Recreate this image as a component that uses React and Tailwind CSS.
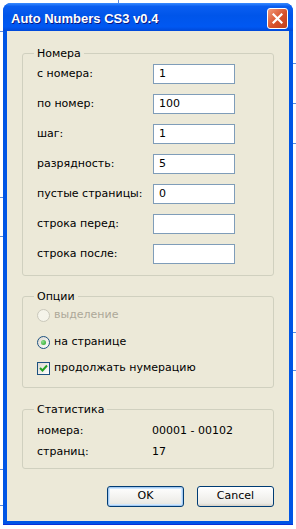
import React from 'react';

const rows = [
  { label: 'с номера:', value: '1' },
  { label: 'по номер:', value: '100' },
  { label: 'шаг:', value: '1' },
  { label: 'разрядность:', value: '5' },
  { label: 'пустые страницы:', value: '0' },
  { label: 'строка перед:', value: '' },
  { label: 'строка после:', value: '' },
];

function Group({ title, className, children }) {
  return (
    <fieldset className={`border border-[#D0D0BF] rounded-[3px] pl-[11px] pr-[14px] ${className}`}>
      <legend className="px-[3px] leading-[13px]">{title}</legend>
      <div className="pl-[3px]">{children}</div>
    </fieldset>
  );
}

function Radio({ checked, disabled, label }) {
  return (
    <div className="flex items-center h-[16px] gap-[4px]">
      <span
        className={`w-[13px] h-[13px] rounded-full border flex items-center justify-center ${
          disabled
            ? 'border-[#CAC8BB] bg-[#F5F4EA]'
            : 'border-[#1C5180] bg-[linear-gradient(135deg,#DCD9CF,#FFFFFF)]'
        }`}
      >
        {checked && (
          <span className="w-[5px] h-[5px] rounded-full bg-[radial-gradient(circle_at_35%_35%,#8DE08D,#21A121)]" />
        )}
      </span>
      <span className={disabled ? 'text-[#ACA899]' : ''}>{label}</span>
    </div>
  );
}

function Checkbox({ label }) {
  return (
    <div className="flex items-center h-[16px] gap-[4px]">
      <span className="w-[13px] h-[13px] border border-[#1C5180] bg-[linear-gradient(135deg,#DCD9CF,#FFFFFF)] flex items-center justify-center">
        <svg width="9" height="9" viewBox="0 0 9 9">
          <path d="M1 4 L3.5 6.5 L8 1.5" fill="none" stroke="#21A121" strokeWidth="2" />
        </svg>
      </span>
      <span>{label}</span>
    </div>
  );
}

export default function App() {
  return (
    <div className="relative w-[296px] h-[529px] bg-white pt-[3px] pl-[3px] text-[11px] text-black font-['DejaVu_Sans',sans-serif]">
      {/* guide lines from the layout behind the dialog */}
      <div className="absolute left-0 top-[31px] w-[3px] h-px bg-[#5B8BE0]" />
      <div className="absolute left-0 top-[197px] w-[3px] h-px bg-[#5B8BE0]" />
      <div className="absolute left-0 top-[236px] w-[3px] h-px bg-[#5B8BE0]" />
      <div className="absolute left-0 top-[469px] w-[3px] h-px bg-[#5B8BE0]" />
      <div className="absolute left-0 top-[505px] w-[3px] h-px bg-[#5B8BE0]" />
      <div className="absolute right-0 top-[63px] w-[3px] h-px bg-[#5B8BE0]" />
      <div className="absolute right-0 top-[103px] w-[3px] h-px bg-[#5B8BE0]" />
      <div className="absolute right-0 top-[143px] w-[3px] h-px bg-[#5B8BE0]" />
      <div className="absolute right-0 top-[332px] w-[3px] h-px bg-[#5B8BE0]" />
      <div className="absolute right-0 top-[370px] w-[3px] h-px bg-[#5B8BE0]" />
      <div className="absolute left-[118px] top-0 w-px h-[3px] bg-[#5B8BE0]" />

      <div className="w-[290px] h-[522px] flex flex-col rounded-t-[8px] overflow-hidden bg-[#0055E5] border-b-[1px] border-[#0831D9]">
        <div className="h-[28px] shrink-0 flex items-center pl-[8px] pt-[4px] bg-[linear-gradient(to_bottom,#3A8CFF_0%,#0A5EF0_12%,#0055EA_45%,#0058F2_85%,#0048D8_100%)]">
          <span className="text-white font-bold text-[13px] font-['Liberation_Sans',sans-serif] [text-shadow:1px_1px_#0A1883]">
            Auto Numbers CS3 v0.4
          </span>
          <span className="ml-auto mr-[5px] -mt-[2px] w-[21px] h-[21px] rounded-[3px] border border-white bg-[linear-gradient(135deg,#F29A7A,#D8512C_55%,#C0401C)] flex items-center justify-center">
            <svg width="11" height="11" viewBox="0 0 11 11">
              <path d="M1.5 1.5 L9.5 9.5 M9.5 1.5 L1.5 9.5" stroke="white" strokeWidth="2.2" strokeLinecap="square" />
            </svg>
          </span>
        </div>

        <div className="flex-1 mx-[4px] mb-[3px] bg-[#ECE9D8] px-[15px] pt-[16px]">
          <Group title="Номера" className="pt-[4px] pb-[11px]">
            <div className="flex flex-col gap-[10px]">
              {rows.map((r) => (
                <div key={r.label} className="flex items-center h-[20px]">
                  <span className="w-[116px]">{r.label}</span>
                  <div className="w-[82px] h-[20px] border border-[#7F9DB9] bg-white pl-[5px] flex items-center">
                    {r.value}
                  </div>
                </div>
              ))}
            </div>
          </Group>

          <Group title="Опции" className="mt-[14px] pt-[4px] pb-[11px]">
            <Radio disabled label="выделение" />
            <div className="mt-[11px]">
              <Radio checked label="на странице" />
            </div>
            <div className="mt-[10px]">
              <Checkbox label="продолжать нумерацию" />
            </div>
          </Group>

          <Group title="Статистика" className="mt-[15px] pt-[7px] pb-[8px]">
            <div className="flex items-center h-[16px]">
              <span className="w-[115px]">номера:</span>
              <span>00001 - 00102</span>
            </div>
            <div className="flex items-center h-[16px] mt-[5px]">
              <span className="w-[115px]">страниц:</span>
              <span>17</span>
            </div>
          </Group>

          <div className="flex justify-end gap-[13px] mt-[17px]">
            <button className="w-[77px] h-[21px] rounded-[3px] border border-[#003C74] bg-[linear-gradient(to_bottom,#FFFFFF,#ECEBE6_85%,#D6D0C5)] shadow-[inset_0_0_0_1px_#A6CAF0,inset_0_0_0_2px_#CEE7FF]">
              OK
            </button>
            <button className="w-[77px] h-[21px] rounded-[3px] border border-[#003C74] bg-[linear-gradient(to_bottom,#FFFFFF,#ECEBE6_85%,#D6D0C5)]">
              Cancel
            </button>
          </div>
        </div>
      </div>
    </div>
  );
}
